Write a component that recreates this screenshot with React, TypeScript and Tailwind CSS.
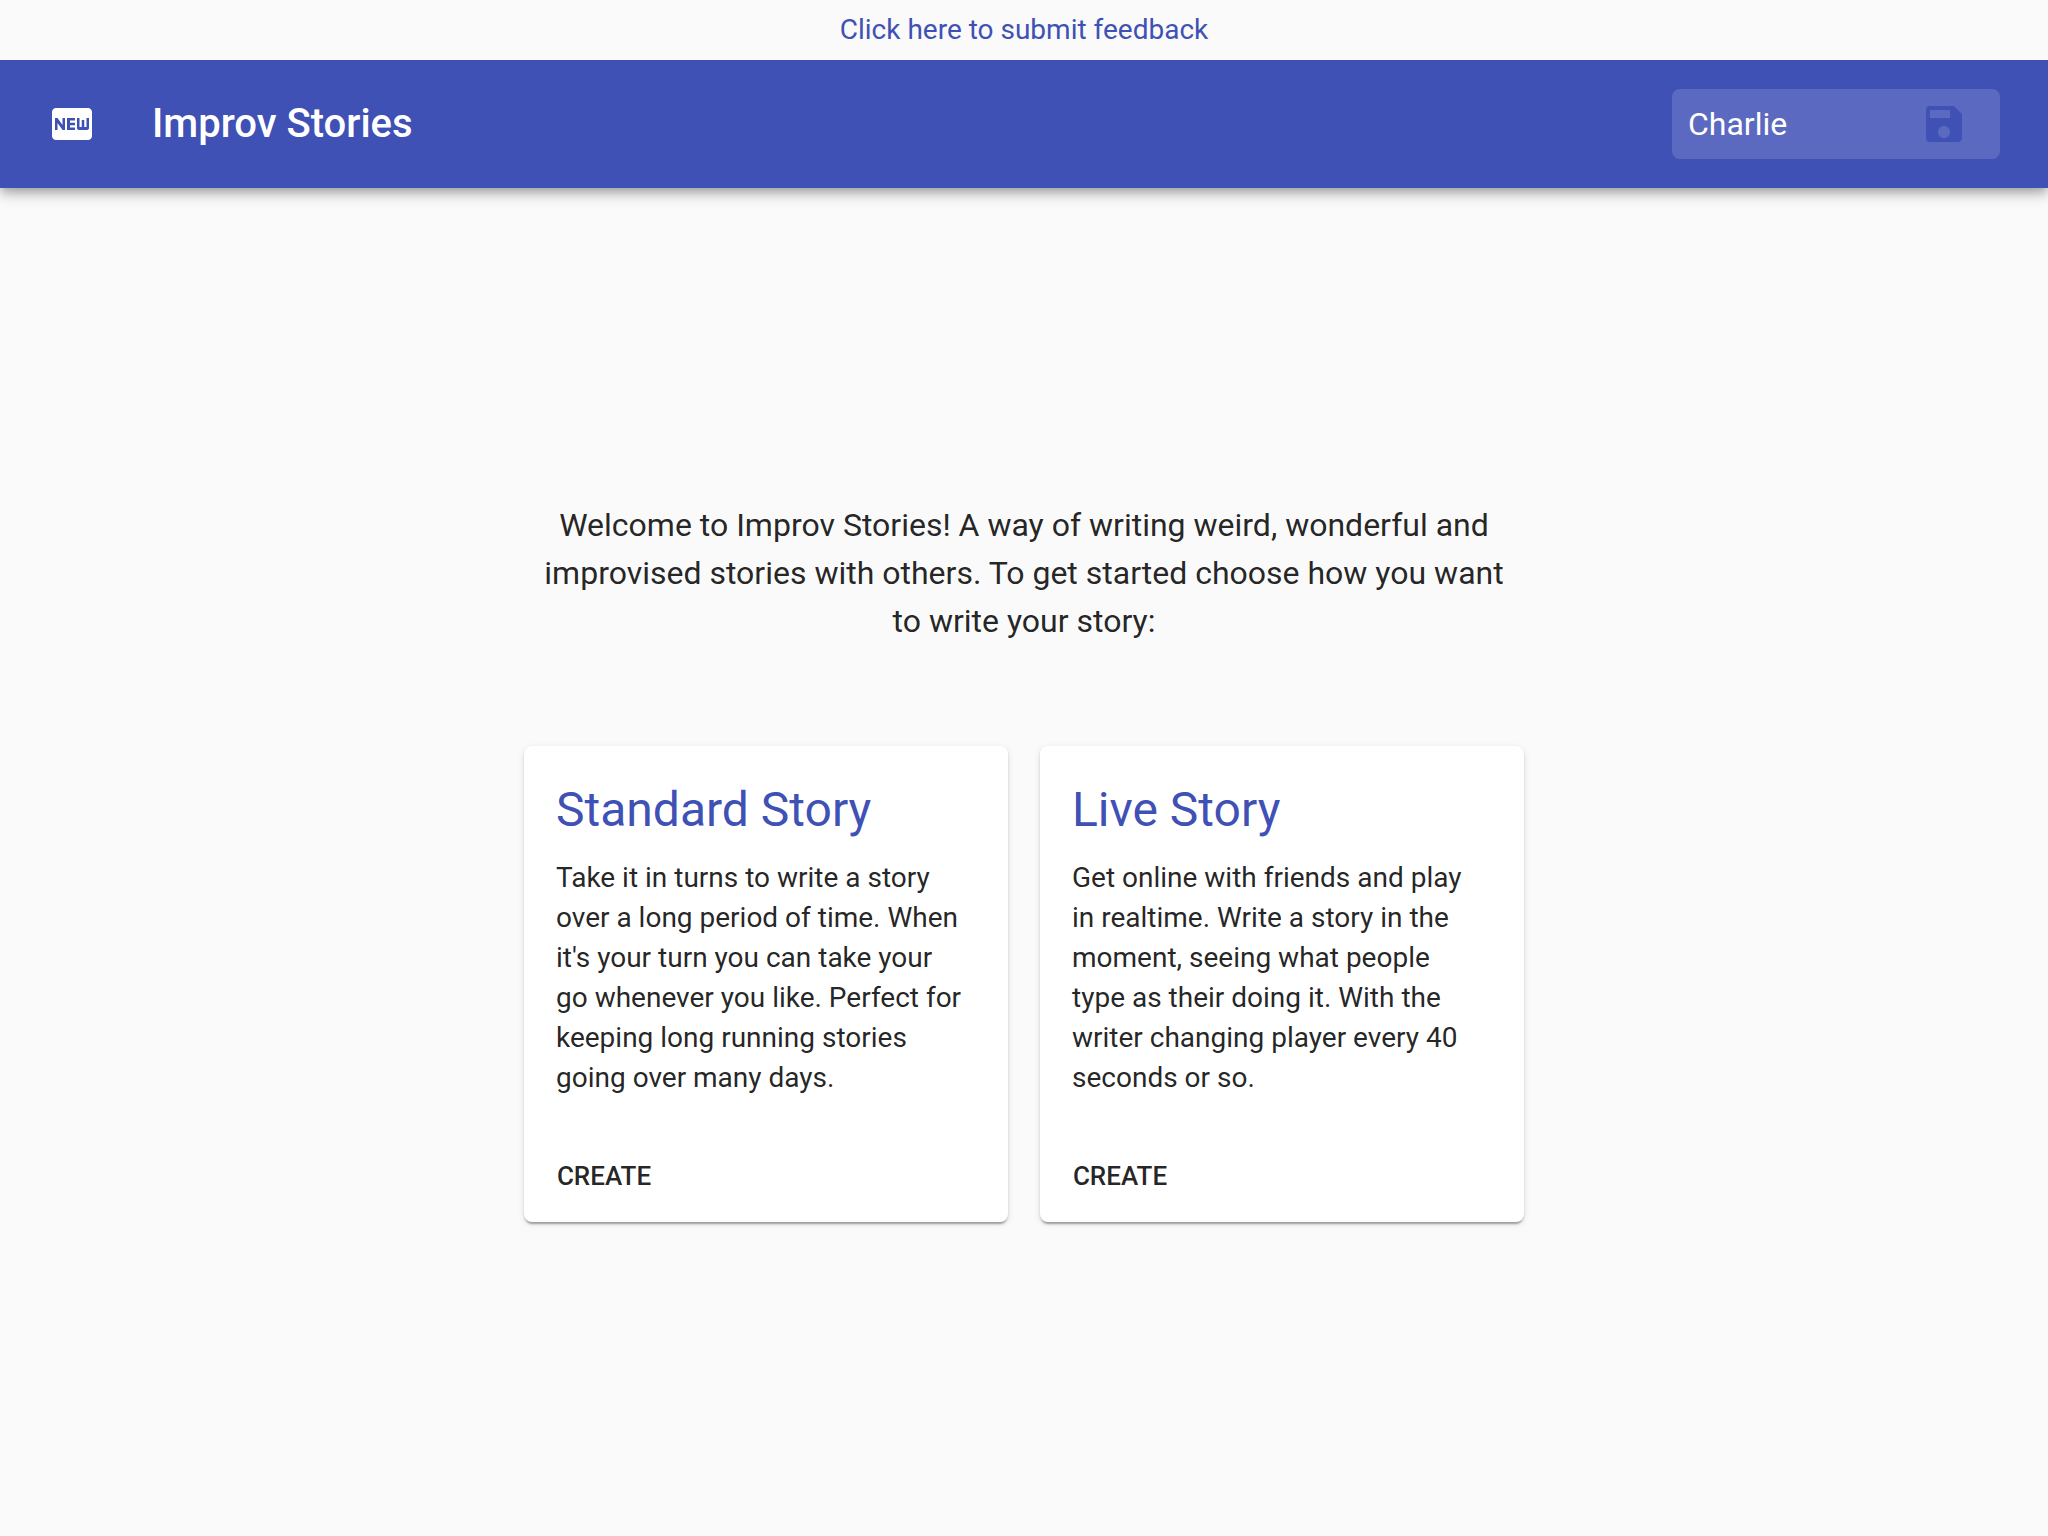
import { useState } from "react";
import { MdFiberNew, MdSave } from "react-icons/md";

type Story = { title: string; description: string };

const stories: Story[] = [
  {
    title: "Standard Story",
    description:
      "Take it in turns to write a story over a long period of time. When it's your turn you can take your go whenever you like. Perfect for keeping long running stories going over many days.",
  },
  {
    title: "Live Story",
    description:
      "Get online with friends and play in realtime. Write a story in the moment, seeing what people type as their doing it. With the writer changing player every 40 seconds or so.",
  },
];

function Header() {
  const [name, setName] = useState("Charlie");
  return (
    <header className="relative flex h-32 items-center bg-[#3f51b5] px-12 text-white shadow-[0_4px_8px_-2px_rgba(0,0,0,0.2),0_8px_10px_0_rgba(0,0,0,0.14),0_2px_20px_0_rgba(0,0,0,0.12)]">
      <button type="button" aria-label="New story" className="-ml-6 mr-8 rounded-full p-6">
        <MdFiberNew className="size-12" />
      </button>
      <h1 className="grow text-[40px] leading-16 font-medium">Improv Stories</h1>
      <form
        className="flex h-[70px] w-[328px] items-center rounded-lg bg-white/15 pr-2"
        onSubmit={(event) => event.preventDefault()}
      >
        <input
          type="text"
          aria-label="Your name"
          value={name}
          onChange={(event) => setName(event.target.value)}
          className="min-w-0 grow bg-transparent pl-4 text-[32px] leading-[38px] text-white outline-none"
        />
        <button type="submit" aria-label="Save name" className="shrink-0 px-6 text-[#3f51b5]">
          <MdSave className="size-12" />
        </button>
      </form>
    </header>
  );
}

function StoryCard({ title, description }: Story) {
  return (
    <article className="flex flex-col rounded-lg bg-white shadow-[0_4px_2px_-2px_rgba(0,0,0,0.2),0_2px_2px_0_rgba(0,0,0,0.14),0_2px_6px_0_rgba(0,0,0,0.12)]">
      <div className="grow py-8 pr-10 pl-8">
        <h2 className="mb-4 text-5xl leading-16 text-[#3f51b5]">{title}</h2>
        <p className="text-[28px] leading-10">{description}</p>
      </div>
      <div className="p-4">
        <button type="button" className="h-15 w-32 rounded-lg text-[26px] font-medium uppercase">
          Create
        </button>
      </div>
    </article>
  );
}

export default function App() {
  return (
    <div className="flex min-h-screen flex-col bg-[#fafafa] font-['Roboto',sans-serif] text-black/87">
      <div className="relative z-10 bg-[#fafafa] py-2.5 text-center text-[28px] leading-10">
        <a href="#feedback" className="text-[#3f51b5]">
          Click here to submit feedback
        </a>
      </div>
      <Header />
      <main className="mx-auto flex w-full max-w-[1000px] grow flex-col justify-center gap-[101px] pb-px">
        <p className="px-3 text-center text-[32px] leading-12">
          Welcome to Improv Stories! A way of writing weird, wonderful and improvised stories with others. To get
          started choose how you want to write your story:
        </p>
        <div className="grid grid-cols-2 gap-8">
          {stories.map((story) => (
            <StoryCard key={story.title} {...story} />
          ))}
        </div>
      </main>
    </div>
  );
}
